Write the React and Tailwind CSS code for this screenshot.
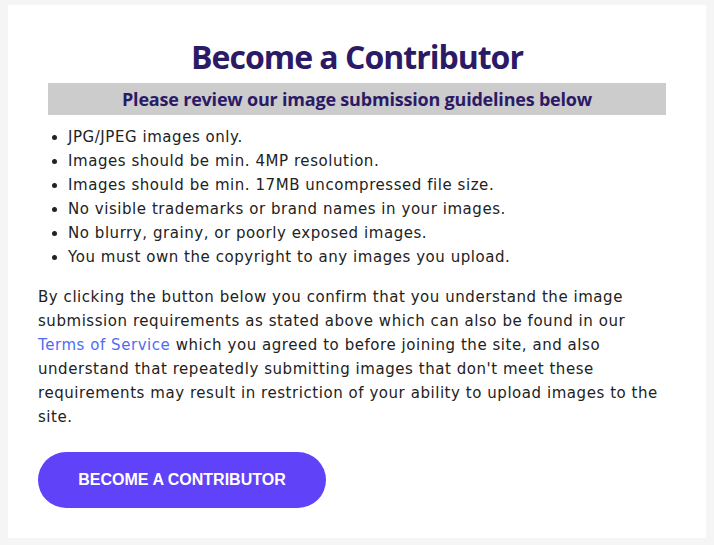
export default function App() {
  const items = [
    "JPG/JPEG images only.",
    "Images should be min. 4MP resolution.",
    "Images should be min. 17MB uncompressed file size.",
    "No visible trademarks or brand names in your images.",
    "No blurry, grainy, or poorly exposed images.",
    "You must own the copyright to any images you upload.",
  ];
  return (
    <div className="min-h-[545px] bg-[#f5f5f5] px-2 pt-[5px] pb-[7px]">
      <div className="w-[698px] h-[533px] bg-white px-[30px] pt-[32px]">
        <h1 className="text-center text-[32px] leading-[40px] font-bold text-[#2b1a66] font-['Open_Sans',sans-serif] tracking-[-1px]">
          Become a Contributor
        </h1>
        <div className="mx-[10px] mt-[6px] h-[32px] bg-[#cccccc] flex items-center justify-center">
          <h2 className="text-[18px] font-bold text-[#2b1a66] font-['Open_Sans',sans-serif] tracking-[-0.2px]">
            Please review our image submission guidelines below
          </h2>
        </div>
        <ul className="mt-[10px] list-disc pl-[30px] text-[15px] leading-[24px] text-[#222] font-['DejaVu_Sans',sans-serif] tracking-[0.55px]">
          {items.map((t) => (
            <li key={t}>{t}</li>
          ))}
        </ul>
        <p className="mt-[16px] text-[15px] leading-[24px] text-[#222] font-['DejaVu_Sans',sans-serif] tracking-[0.55px] max-w-[638px]">
          By clicking the button below you confirm that you understand the image submission requirements as stated above which can also be found in our{" "}
          <a className="text-[#4f6cf5]">Terms of Service</a> which you agreed to before joining the site, and also understand that repeatedly submitting images that don't meet these requirements may result in restriction of your ability to upload images to the site.
        </p>
        <button className="mt-[23px] w-[288px] h-[56px] rounded-full bg-[#6042f9] text-white text-[16px] font-bold font-['Liberation_Sans',sans-serif]">
          BECOME A CONTRIBUTOR
        </button>
      </div>
    </div>
  );
}
